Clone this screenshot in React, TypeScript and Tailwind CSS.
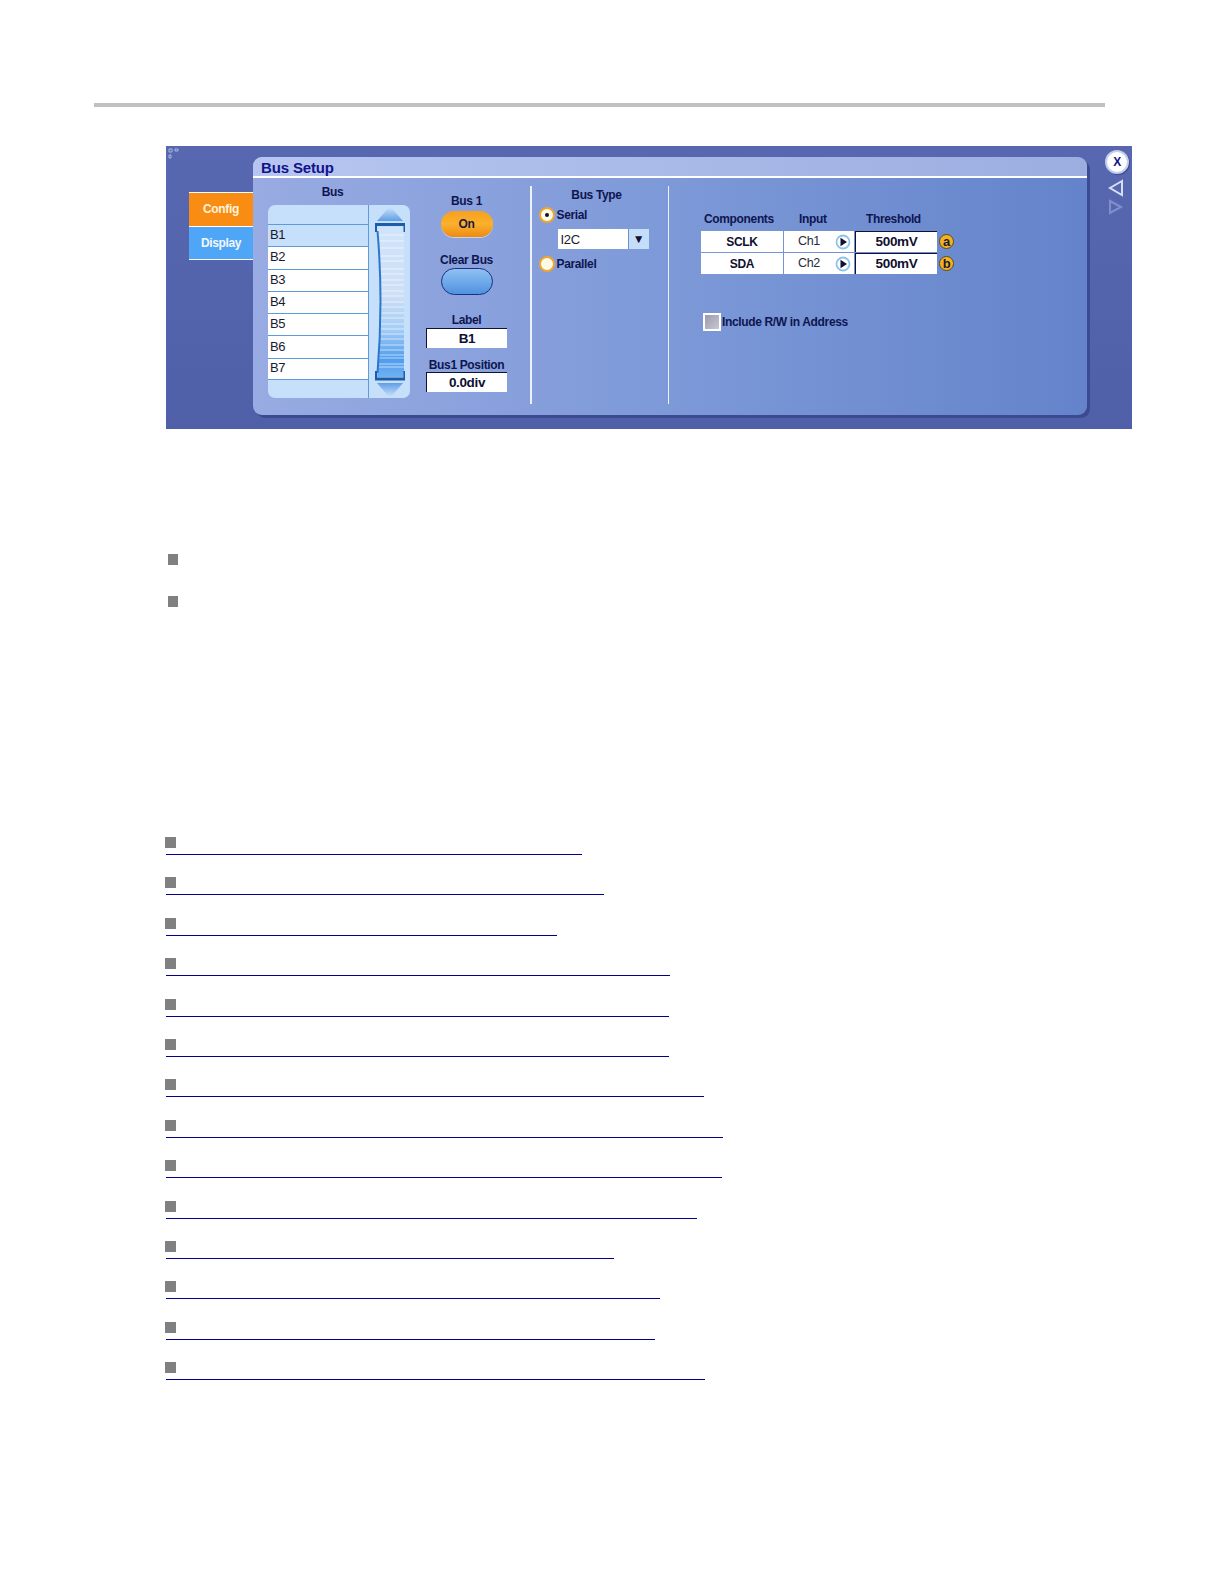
const busRows = ['B1', 'B2', 'B3', 'B4', 'B5', 'B6', 'B7']

// right edge of each blue rule, as a width from its left edge
const linkWidths = [416, 438, 391, 504, 503, 503, 538, 557, 556, 531, 448, 494, 489, 539]

const sliderLines = [8, 14, 21, 29, 34, 42, 47, 53, 58, 64, 69, 75, 80, 86, 91, 97, 102, 107, 112, 118, 123, 128, 131, 137, 140]

function ScrollBar() {
  return (
    <svg width="42" height="193" viewBox="0 0 42 193" className="block shrink-0">
      <defs>
        <linearGradient id="thumb" x1="0" y1="0" x2="0" y2="1">
          <stop offset="0" stopColor="#cfe4fb" />
          <stop offset="0.45" stopColor="#cfdff5" />
          <stop offset="0.68" stopColor="#a4cdf6" />
          <stop offset="0.88" stopColor="#4f9cee" />
          <stop offset="1" stopColor="#6fb0f2" />
        </linearGradient>
        <linearGradient id="arrowUp" x1="0" y1="0" x2="0" y2="1">
          <stop offset="0" stopColor="#d5e7fb" />
          <stop offset="1" stopColor="#5f9fe6" />
        </linearGradient>
        <linearGradient id="arrowDown" x1="0" y1="0" x2="0" y2="1">
          <stop offset="0" stopColor="#5f9fe6" />
          <stop offset="1" stopColor="#d5e7fb" />
        </linearGradient>
      </defs>
      <path d="M8 16 L21 1 L34 16 Z" fill="url(#arrowUp)" />
      <path d="M8 178 L34 178 L21 193 Z" fill="url(#arrowDown)" />
      <path d="M8 22 Q14 95 8 172 L35 172 L35 22 Z" fill="url(#thumb)" />
      {sliderLines.map(y => (
        <line key={y} x1="10" x2="35" y1={22 + y} y2={22 + y} stroke="#ffffff" strokeOpacity="0.6" strokeWidth="1" />
      ))}
      <path d="M8.5 26 Q14.5 95 8.5 168" fill="none" stroke="#2a78cc" strokeWidth="2" />
      <path d="M6 27 V18 H36 V27 H34.5 V21 H8 V27 Z" fill="#1d5ca8" />
      <path d="M6 166 V175.5 H36 V166 H34.5 V172.5 H8 V166 Z" fill="#1d5ca8" />
    </svg>
  )
}

function BusList() {
  return (
    <div className="flex h-[193px] w-[142px] overflow-hidden rounded-[7px] bg-[#c6dffa]">
      <div className="w-[101px] shrink-0 border-r border-[#5f9bd8]">
        <div className="h-[19px]" />
        {busRows.map((row, i) => (
          <div
            key={row}
            className={`flex h-[22.3px] items-center border-t border-[#5f9bd8] pb-[2px] pl-[2px] text-[13px] font-normal leading-none text-[#1a1a2e] ${i === 0 ? 'bg-[#c6dffa]' : 'bg-white'} ${i === 6 ? 'border-b' : ''}`}
          >
            {row}
          </div>
        ))}
      </div>
      <ScrollBar />
    </div>
  )
}

function ReadoutBox({ value }: { value: string }) {
  return (
    <div className="flex h-[20px] w-[81px] items-center justify-center border-t border-l border-t-[#111133] border-l-[#111133] bg-white text-[13.5px] font-bold leading-none text-[#101030]">
      {value}
    </div>
  )
}

function Radio({ checked }: { checked?: boolean }) {
  return (
    <div className="flex h-[16px] w-[16px] items-center justify-center rounded-full border-[2.5px] border-[#f0a52c] bg-[#fdfbe8]">
      {checked && <div className="h-[4px] w-[4px] rounded-full bg-[#101030]" />}
    </div>
  )
}

function PlayIcon() {
  return (
    <svg width="16" height="16" viewBox="0 0 16 16" className="block">
      <circle cx="8" cy="8" r="6.5" fill="#ffffff" stroke="#8cc4ea" strokeWidth="1.8" />
      <path d="M5.5 3.8 L12 8 L5.5 12.2 Z" fill="#101030" />
    </svg>
  )
}

function ThresholdRow({ name, channel, badge }: { name: string; channel: string; badge: string }) {
  return (
    <div className="flex h-[21px] items-center gap-px">
      <div className="flex h-full w-[82px] items-center justify-center bg-white text-[12px] font-bold text-[#101030]">
        {name}
      </div>
      <div className="flex h-full w-[70px] items-center justify-between bg-white pl-[14px] pr-[3px] text-[12.5px] font-normal text-[#2a2a3a]">
        {channel}
        <PlayIcon />
      </div>
      <div className="flex h-full w-[82px] items-center justify-center border-t border-l border-t-[#111133] border-l-[#111133] bg-white text-[13.5px] font-bold text-[#101030]">
        500mV
      </div>
      <div className="ml-[1px] flex h-[15px] w-[15px] items-center justify-center rounded-full border border-[#5a4a10] bg-[#f4b223] text-[13px] font-bold leading-none text-[#1a1a30]">
        {badge}
      </div>
    </div>
  )
}

function BusSetupWindow() {
  return (
    <div className="relative ml-[166px] mt-[39px] flex h-[283px] w-[966px] bg-gradient-to-b from-[#5868b0] to-[#4f60a8] font-['Liberation_Sans',Arial,sans-serif] tracking-[-0.35px]">
      {/* little corner marks, top left */}
      <svg width="12" height="12" viewBox="0 0 12 12" className="absolute left-[2px] top-[2px]">
        <path d="M1 1h3v3H1z M7 1h3v2H7z M1 7h2v3H1z" fill="none" stroke="#a9b6e0" strokeWidth="1" />
      </svg>

      <div className="ml-[23px] mt-[46px] w-[64px]">
        <div className="flex h-[35px] items-center justify-center border-y border-white bg-[#f98d14] pb-[2px] text-[12px] font-bold text-[#fdf3dc]">
          Config
        </div>
        <div className="flex h-[33px] items-center justify-center border-b border-white bg-[#4fa6f6] text-[12px] font-bold text-[#f2f8ff]">
          Display
        </div>
      </div>

      <div className="mt-[11px] flex h-[258px] w-[834px] flex-col overflow-hidden rounded-[9px] bg-gradient-to-r from-[#98abe2] via-[#7d99d8] to-[#6483ca] shadow-[3px_3px_0_#3c4a90]">
        <div className="flex h-[21px] shrink-0 items-center border-b-2 border-white bg-gradient-to-r from-[#b6c6f0] to-[#9cade0] pl-[8px] pt-[1px] text-[15px] font-bold leading-none tracking-[-0.15px] text-[#12128c]">
          Bus Setup
        </div>

        <div className="flex flex-1 pt-[8px] text-[12px] font-bold leading-none text-[#0e1650]">
          <div className="ml-[15px] w-[142px] shrink-0">
            <div className="flex h-[19px] items-start justify-center pr-[13px]">Bus</div>
            <BusList />
          </div>

          <div className="ml-[15px] flex w-[83px] shrink-0 flex-col items-center">
            <div className="mt-[9px]">Bus 1</div>
            <div className="mt-[4px] flex h-[26px] w-[52px] items-center justify-center rounded-full bg-gradient-to-b from-[#f6a01e] via-[#fbb02c] to-[#ee8a10] text-[#1a1a40] shadow-[0_1px_0_#c7d2f0]">
              On
            </div>
            <div className="mt-[17px]">Clear Bus</div>
            <div className="mt-[2px] h-[27px] w-[52px] rounded-full border border-[#1c2f80] bg-gradient-to-b from-[#8fc1f2] to-[#4f92e0]" />
            <div className="mt-[19px]">Label</div>
            <div className="mt-[2px]">
              <ReadoutBox value="B1" />
            </div>
            <div className="mt-[11px] whitespace-nowrap">Bus1 Position</div>
            <div className="mt-[1px]">
              <ReadoutBox value="0.0div" />
            </div>
          </div>

          <div className="ml-[22px] h-[218px] w-[1.5px] shrink-0 bg-[#eef2fc]" />

          <div className="w-[136px] shrink-0 pl-[7px]">
            <div className="flex h-[8px] justify-center pr-[13px] leading-[18px]">Bus Type</div>
            <div className="mt-[13px] flex items-center gap-[2px]">
              <Radio checked />
              <span>Serial</span>
            </div>
            <div className="ml-[19px] mt-[6px] flex h-[20px] w-[91px]">
              <div className="flex flex-1 items-center bg-white pl-[3px] text-[13px] font-normal text-[#1a1a2e]">I2C</div>
              <div className="flex w-[21px] items-center justify-center border-l border-[#6f8fc8] bg-[#c4defa] text-[12px] text-[#101030]">
                ▼
              </div>
            </div>
            <div className="mt-[7px] flex items-center gap-[2px]">
              <Radio />
              <span>Parallel</span>
            </div>
          </div>

          <div className="h-[218px] w-[1.5px] shrink-0 bg-[#eef2fc]" />

          <div className="pl-[32px] pt-[26px]">
            <div className="flex h-[14px] items-center">
              <span className="ml-[3px] w-[95px]">Components</span>
              <span className="w-[67px]">Input</span>
              <span>Threshold</span>
            </div>
            <div className="mt-[5px] flex flex-col gap-px">
              <ThresholdRow name="SCLK" channel="Ch1" badge="a" />
              <ThresholdRow name="SDA" channel="Ch2" badge="b" />
            </div>
            <div className="ml-[2px] mt-[39px] flex items-center gap-px">
              <div className="h-[18px] w-[18px] border-2 border-white bg-gradient-to-br from-[#9a9ab0] to-[#c8c8d0]" />
              <span className="whitespace-nowrap">Include R/W in Address</span>
            </div>
          </div>
        </div>
      </div>

      <div className="ml-[16px] mt-[4px] flex w-[26px] shrink-0 flex-col items-center">
        <div className="ml-[2px] flex h-[24px] w-[24px] items-center justify-center rounded-full border-2 border-[#c3cdec] bg-white text-[12px] font-bold leading-none text-[#12128c] shadow-[1px_1px_0_#3c4a90]">
          X
        </div>
        <svg width="16" height="18" viewBox="0 0 16 18" className="mt-[5px]">
          <path d="M14 2 L2 9 L14 16 Z" fill="none" stroke="#d6def4" strokeWidth="2" />
        </svg>
        <svg width="16" height="16" viewBox="0 0 16 16" className="mt-[2px]">
          <path d="M2 2 L13 8 L2 14 Z" fill="none" stroke="#7d8fce" strokeWidth="2" />
        </svg>
      </div>
    </div>
  )
}

export default function App() {
  return (
    <div className="min-h-[1584px] w-[1224px] bg-white pt-[103px]">
      <div className="ml-[94px] h-[4px] w-[1011px] bg-[#c0c0c0]" />

      <BusSetupWindow />

      <div className="ml-[168px] mt-[125px] flex flex-col gap-[31px]">
        <div className="h-[11px] w-[10px] bg-[#808080]" />
        <div className="h-[11px] w-[10px] bg-[#808080]" />
      </div>

      <div className="ml-[165px] mt-[230px]">
        {linkWidths.map((width, i) => (
          <div key={i} className="h-[40.4px]">
            <div className="h-[11px] w-[11px] bg-[#808080]" />
            <div className="ml-[1px] mt-[6px] h-[1px] bg-[#00008b]" style={{ width }} />
          </div>
        ))}
      </div>
    </div>
  )
}
